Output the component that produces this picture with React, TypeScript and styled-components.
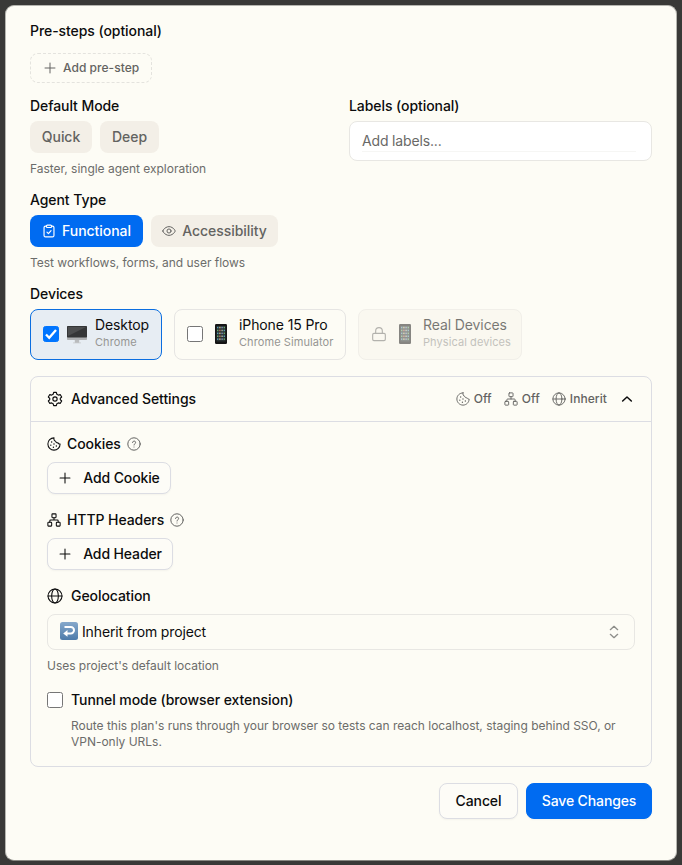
import React from "react";
import styled, { createGlobalStyle, css } from "styled-components";

const Global = createGlobalStyle`
  * { box-sizing: border-box; }
  html, body, #root { height: 100%; }
  body { margin: 0; background: #393937; font-family: Inter, "Liberation Sans", sans-serif; color: #0c0c0d; overflow: hidden; }
  button { font-family: inherit; margin: 0; }
`;

const Backdrop = styled.main`
  height: 100%;
  padding: 5px 5px 4px;
`;
const Dialog = styled.section`
  height: 856px;
  padding: 15px 24px 0;
  background: #fdfcf5;
  border: 1px solid #b5b5af;
  border-bottom-color: #888882;
  border-radius: 9px;
`;
const Label = styled.div`
  height: 20px;
  font-size: 14px;
  line-height: 20px;
  font-weight: 480;
  white-space: nowrap;
  letter-spacing: -0.07px;
`;
const Help = styled.p<{ $indent?: number }>`
  margin: 8px 0 0 ${(p) => p.$indent ?? 0}px;
  font-size: 12px;
  line-height: 16px;
  color: #6c6c6a;
  letter-spacing: -0.02px;
`;
const DashedButton = styled.button`
  display: flex;
  align-items: center;
  gap: 6px;
  width: 122px;
  height: 30px;
  margin-top: 12px;
  padding: 0 0 0 12px;
  border: 1px dashed #e4e3de;
  border-radius: 8px;
  background: transparent;
  color: #636361;
  font-size: 12px;
  line-height: 16px;
  font-weight: 480;
  letter-spacing: 0.04px;
  white-space: nowrap;
`;
const Columns = styled.div`
  display: grid;
  grid-template-columns: 1fr 1fr;
  gap: 16px;
  margin-top: 13px;
`;
const Field = styled.div`
  margin-top: 13px;
`;
const Row = styled.div<{ $gap: number }>`
  display: flex;
  gap: ${(p) => p.$gap}px;
  margin-top: 5px;
`;
const Chip = styled.button<{ $w: number; $active?: boolean }>`
  display: flex;
  align-items: center;
  justify-content: center;
  gap: 6px;
  width: ${(p) => p.$w}px;
  height: 32px;
  padding: 0;
  border: 0;
  border-radius: 8px;
  background: ${(p) => (p.$active ? "#006bf1" : "#f3efe7")};
  color: ${(p) => (p.$active ? "#fff" : "#636361")};
  font-size: 14px;
  line-height: 20px;
  font-weight: 480;
  letter-spacing: -0.05px;
  white-space: nowrap;
`;
const LabelsInput = styled.div`
  height: 40px;
  margin-top: 5px;
  padding: 9px 15px 9px 12px;
  border: 1px solid #e8e7e3;
  border-radius: 8px;
  background: #fff;
`;
const Placeholder = styled.div`
  height: 21px;
  border-bottom: 1px solid #f6f6f4;
  color: #696967;
  font-size: 14px;
  line-height: 20px;
  letter-spacing: -0.16px;
`;
const Card = styled.div<{ $w: number; $state?: "selected" | "disabled" }>`
  display: flex;
  align-items: center;
  width: ${(p) => p.$w}px;
  height: 51px;
  padding: 0 0 1px 12px;
  border: 1px solid #e6e5e3;
  border-radius: 8px;
  ${(p) =>
    p.$state === "selected" &&
    css`
      background: #e7edf3;
      border-color: #0b6ee0;
    `}
  ${(p) =>
    p.$state === "disabled" &&
    css`
      background: #faf8f0;
      border-color: #f1efe9;
    `}
`;
const Box = styled.span<{ $checked?: boolean }>`
  display: flex;
  align-items: center;
  justify-content: center;
  flex: none;
  width: 16px;
  height: 16px;
  border-radius: 2.5px;
  border: 1px solid ${(p) => (p.$checked ? "#0075ff" : "#767676")};
  background: ${(p) => (p.$checked ? "#0075ff" : "#fff")};
`;
const LockSlot = styled.span`
  display: flex;
  flex: none;
  color: #b3b2ad;
`;
const Picto = styled.span<{ $faded?: boolean }>`
  display: flex;
  justify-content: center;
  flex: none;
  width: 20px;
  margin: 0 8px;
  opacity: ${(p) => (p.$faded ? 0.5 : 1)};
`;
const CardText = styled.div<{ $faded?: boolean }>`
  opacity: ${(p) => (p.$faded ? 0.55 : 1)};
  white-space: nowrap;
`;
const CardTitle = styled.div`
  height: 16px;
  margin-bottom: 2px;
  font-size: 14px;
  line-height: 16px;
  letter-spacing: -0.1px;
`;
const CardSub = styled.div`
  height: 16px;
  font-size: 11px;
  line-height: 15px;
  color: #969693;
  letter-spacing: 0.08px;
`;
const Advanced = styled.section`
  height: 391px;
  margin-top: 16px;
  border: 1px solid #dcdde3;
  border-radius: 8px;
`;
const AdvancedHeader = styled.header`
  display: flex;
  align-items: center;
  height: 45px;
  padding: 0 16px;
  border-bottom: 1px solid #dcdde3;
`;
const AdvancedTitle = styled(Label)`
  margin: 0 auto 0 8px;
`;
const Status = styled.span`
  display: flex;
  align-items: center;
  gap: 4px;
  margin-right: 12px;
  color: #636361;
  font-size: 12px;
  font-weight: 480;
  line-height: 16px;
  letter-spacing: 0.08px;
`;
const ChevronSlot = styled.span`
  display: flex;
  justify-content: center;
  width: 16px;
`;
const AdvancedBody = styled.div`
  padding: 12px 16px 0;
`;
const Heading = styled.div<{ $gap: number; $top?: number }>`
  display: flex;
  align-items: center;
  gap: ${(p) => p.$gap}px;
  height: 20px;
  margin-top: ${(p) => p.$top ?? 0}px;
`;
const Hint = styled.span`
  display: flex;
  margin-left: -1px;
  color: #636361;
`;
const OutlineButton = styled.button<{ $w: number; $h?: number }>`
  display: flex;
  align-items: center;
  justify-content: center;
  gap: 11px;
  width: ${(p) => p.$w}px;
  height: ${(p) => p.$h ?? 32}px;
  padding: 0;
  border: 1px solid #dcdde3;
  border-radius: 8px;
  background: #fdfcf7;
  box-shadow: 0 1px 2px rgba(0, 0, 0, 0.04);
  color: #0c0c0d;
  font-size: 14px;
  line-height: 20px;
  font-weight: 480;
  letter-spacing: -0.12px;
  white-space: nowrap;
`;
const AddButton = styled(OutlineButton)`
  margin-top: 8px;
`;
const PrimaryButton = styled(OutlineButton)`
  border-color: #006bf1;
  background: #006bf1;
  color: #fff;
`;
const Select = styled.div`
  display: flex;
  align-items: center;
  height: 36px;
  margin-top: 8px;
  padding: 0 12px;
  border: 1px solid #e8e7e3;
  border-radius: 8px;
`;
const EmojiSlot = styled.span`
  display: flex;
  margin-bottom: 2px;
`;
const SelectText = styled.span`
  margin: 0 auto 0 4px;
  font-size: 14px;
  line-height: 20px;
  letter-spacing: -0.14px;
`;
const FadedIcon = styled.span`
  display: flex;
  color: #8e8e8a;
`;
const Footer = styled.footer`
  display: flex;
  justify-content: flex-end;
  gap: 8px;
  margin-top: 16px;
`;

type P = { size?: number; sw?: number };
const Icon = ({ size = 16, sw = 1.6, children }: P & { children: React.ReactNode }) => (
  <svg width={size} height={size} viewBox="0 0 24 24" fill="none" stroke="currentColor" strokeWidth={sw} strokeLinecap="round" strokeLinejoin="round">
    {children}
  </svg>
);
const Plus = (p: P) => <Icon {...p}><path d="M12 3.500v17M3.500 12h17" /></Icon>;
const Clipboard = (p: P) => (
  <Icon {...p}>
    <path d="M7.500 3.500H6A2.500 2.500 0 0 0 3.500 6v13.500A2.500 2.500 0 0 0 6 22h12a2.500 2.500 0 0 0 2.500-2.500V6A2.500 2.500 0 0 0 18 3.500h-1.500" />
    <rect x="7.500" y="2" width="9" height="4" rx="1.800" />
    <path d="m8.500 14 2.500 2.500 4.500-5" />
  </Icon>
);
const Eye = (p: P) => (
  <Icon {...p}>
    <path d="M1.500 12c0-1.200.7-2 1.600-3C4.900 7 8.200 4.500 12 4.500S19.100 7 20.900 9c.9 1 1.600 1.800 1.600 3s-.7 2-1.600 3c-1.800 2-5.100 4.500-8.900 4.500S4.900 17 3.100 15C2.200 14 1.500 13.200 1.500 12Z" />
    <circle cx="12" cy="12" r="3.500" />
  </Icon>
);
const Lock = (p: P) => (
  <Icon {...p}>
    <rect x="2.500" y="11" width="19" height="11" rx="2" />
    <path d="M7 11V7.500a5 5 0 0 1 10 0V11" />
  </Icon>
);
const Gear = (p: P) => (
  <Icon {...p}>
    <path d="M10 2h4l.8 2.900 2.200 1.300 3-.7 2 3.500-2.100 2.200v1.600l2.100 2.200-2 3.500-3-.7-2.200 1.300L14 22h-4l-.8-2.900L7 17.800l-3 .7L2 15l2.100-2.200v-1.600L2 9l2-3.500 3 .7 2.200-1.300Z" />
    <circle cx="12" cy="12" r="3.200" />
  </Icon>
);
const Cookie = (p: P) => (
  <Icon {...p}>
    <path d="M12 1.500C6 1.500 1.500 6.300 1.500 12S6.200 22.500 12 22.500 22.500 17.700 22.500 12c-1.600.2-3.200-.6-3.500-2-2 .4-3.900-.7-4.100-2.700C12.500 7 11.300 4 12 1.500Z" />
    <path d="M8 8.500h.01M6.500 14h.01M12 12h.01M11 17.500h.01M16 15.500h.01" strokeWidth="2.400" />
  </Icon>
);
const Hierarchy = (p: P) => (
  <Icon {...p}>
    <rect x="8.500" y="1.500" width="7" height="6.500" rx="1" />
    <rect x="1.500" y="16" width="6.500" height="6.500" rx="1" />
    <rect x="16" y="16" width="6.500" height="6.500" rx="1" />
    <path d="M12 8v4M4.800 16v-2.500c0-.8.500-1.500 1.500-1.500h11.400c1 0 1.500.7 1.500 1.500V16" />
  </Icon>
);
const Globe = (p: P) => (
  <Icon {...p}>
    <circle cx="12" cy="12" r="10.500" />
    <ellipse cx="12" cy="12" rx="5" ry="10.500" />
    <path d="M1.500 12h21" />
  </Icon>
);
const Question = (p: P) => (
  <Icon {...p}>
    <circle cx="12" cy="12" r="9.300" />
    <path d="M9.800 9.700a2.300 2.300 0 1 1 3.400 2.100c-.8.500-1.200.9-1.200 1.700M12 16.500h.01" />
  </Icon>
);
const ChevronUp = () => <Icon size={16} sw={2.300}><path d="m5.500 15 6.500-6 6.500 6" /></Icon>;
const UpDown = () => <Icon size={16} sw={2}><path d="m6.500 8.500 5.500-5 5.500 5M6.500 15.500l5.500 5 5.500-5" /></Icon>;

const Desktop = () => (
  <svg width="20" height="20" viewBox="0 0 20 20">
    <rect x="0" y="2" width="20" height="14" rx=".7" fill="#aeb0b2" />
    <rect x="0" y="2" width="20" height="11.500" rx=".7" fill="#353637" />
    <path d="M1 3h18L1 12Z" fill="#4c4d4e" />
    <path d="M7.800 16h4.400v3H7.800Z" fill="#b9bbbd" />
    <path d="M6 18.500h8v.8H6Z" fill="#c7c9cb" />
  </svg>
);
const Phone = () => {
  const colors = ["#5b9ab5", "#a9b7a0", "#c4675f", "#69a96b", "#8792c0", "#cabb80"];
  return (
    <svg width="12" height="20" viewBox="0 0 12 20">
      <rect x="0" y="0" width="12" height="20" rx="1.200" fill="#151515" />
      <rect x="1.500" y="2" width="9" height="15.500" fill="#293333" />
      {Array.from({ length: 20 }, (_, i) => (
        <rect key={i} x={2 + (i % 4) * 2.2} y={2.8 + Math.floor(i / 4) * 2.9} width="1.400" height="1.500" fill={colors[(i * 5 + Math.floor(i / 4)) % 6]} />
      ))}
    </svg>
  );
};
const ReturnEmoji = () => (
  <svg width="18" height="18" viewBox="0 0 18 18">
    <defs>
      <linearGradient id="blue" x1="0" y1="0" x2="0" y2="1">
        <stop offset="0" stopColor="#87a9cb" />
        <stop offset="1" stopColor="#4d7baa" />
      </linearGradient>
    </defs>
    <rect width="18" height="18" rx="2.500" fill="url(#blue)" />
    <path d="M4.500 5h6.300a3.200 3.200 0 0 1 0 6.400H7" fill="none" stroke="#fff" strokeWidth="2" />
    <path d="M7.500 8v6.800L3.200 11.400Z" fill="#fff" />
  </svg>
);

export default function App() {
  return (
    <>
      <Global />
      <Backdrop>
        <Dialog>
          <Label>Pre-steps (optional)</Label>
          <DashedButton><Plus size={14} sw={1.7} />Add pre-step</DashedButton>
          <Columns>
            <div>
              <Label>Default Mode</Label>
              <Row $gap={8}>
                <Chip $w={62}>Quick</Chip>
                <Chip $w={59}>Deep</Chip>
              </Row>
              <Help>Faster, single agent exploration</Help>
            </div>
            <div>
              <Label>Labels (optional)</Label>
              <LabelsInput><Placeholder>Add labels...</Placeholder></LabelsInput>
            </div>
          </Columns>
          <Field>
            <Label>Agent Type</Label>
            <Row $gap={8}>
              <Chip $w={113} $active><Clipboard size={14} sw={2} />Functional</Chip>
              <Chip $w={127}><Eye size={14} sw={1.7} />Accessibility</Chip>
            </Row>
            <Help>Test workflows, forms, and user flows</Help>
          </Field>
          <Field>
            <Label>Devices</Label>
            <Row $gap={12}>
              <Card $w={132} $state="selected">
                <Box $checked>
                  <svg width="14" height="14" viewBox="0 0 14 14" fill="none" stroke="#fff" strokeWidth="2.300"><path d="m2 7.500 3.200 3.200L12 3" /></svg>
                </Box>
                <Picto><Desktop /></Picto>
                <CardText><CardTitle>Desktop</CardTitle><CardSub>Chrome</CardSub></CardText>
              </Card>
              <Card $w={172}>
                <Box />
                <Picto><Phone /></Picto>
                <CardText><CardTitle>iPhone 15 Pro</CardTitle><CardSub>Chrome Simulator</CardSub></CardText>
              </Card>
              <Card $w={164} $state="disabled">
                <LockSlot><Lock size={16} sw={1.7} /></LockSlot>
                <Picto $faded><Phone /></Picto>
                <CardText $faded><CardTitle>Real Devices</CardTitle><CardSub>Physical devices</CardSub></CardText>
              </Card>
            </Row>
          </Field>
          <Advanced>
            <AdvancedHeader>
              <Gear sw={1.7} />
              <AdvancedTitle>Advanced Settings</AdvancedTitle>
              <Status><Cookie size={14} />Off</Status>
              <Status><Hierarchy size={14} />Off</Status>
              <Status><Globe size={14} />Inherit</Status>
              <ChevronSlot><ChevronUp /></ChevronSlot>
            </AdvancedHeader>
            <AdvancedBody>
              <Heading $gap={6}><Cookie size={14} sw={1.8} /><Label>Cookies</Label><Hint><Question size={16} sw={1.5} /></Hint></Heading>
              <AddButton $w={124}><Plus size={14} sw={1.8} />Add Cookie</AddButton>
              <Heading $gap={6} $top={16}><Hierarchy size={14} sw={1.8} /><Label>HTTP Headers</Label><Hint><Question size={16} sw={1.5} /></Hint></Heading>
              <AddButton $w={126}><Plus size={14} sw={1.8} />Add Header</AddButton>
              <Heading $gap={8} $top={16}><Globe /><Label>Geolocation</Label></Heading>
              <Select><EmojiSlot><ReturnEmoji /></EmojiSlot><SelectText>Inherit from project</SelectText><FadedIcon><UpDown /></FadedIcon></Select>
              <Help>Uses project's default location</Help>
              <Heading $gap={8} $top={16}><Box /><Label>Tunnel mode (browser extension)</Label></Heading>
              <Help $indent={24}>Route this plan's runs through your browser so tests can reach localhost, staging behind SSO, or VPN-only URLs.</Help>
            </AdvancedBody>
          </Advanced>
          <Footer>
            <OutlineButton $w={79} $h={36}>Cancel</OutlineButton>
            <PrimaryButton $w={126} $h={36}>Save Changes</PrimaryButton>
          </Footer>
        </Dialog>
      </Backdrop>
    </>
  );
}
